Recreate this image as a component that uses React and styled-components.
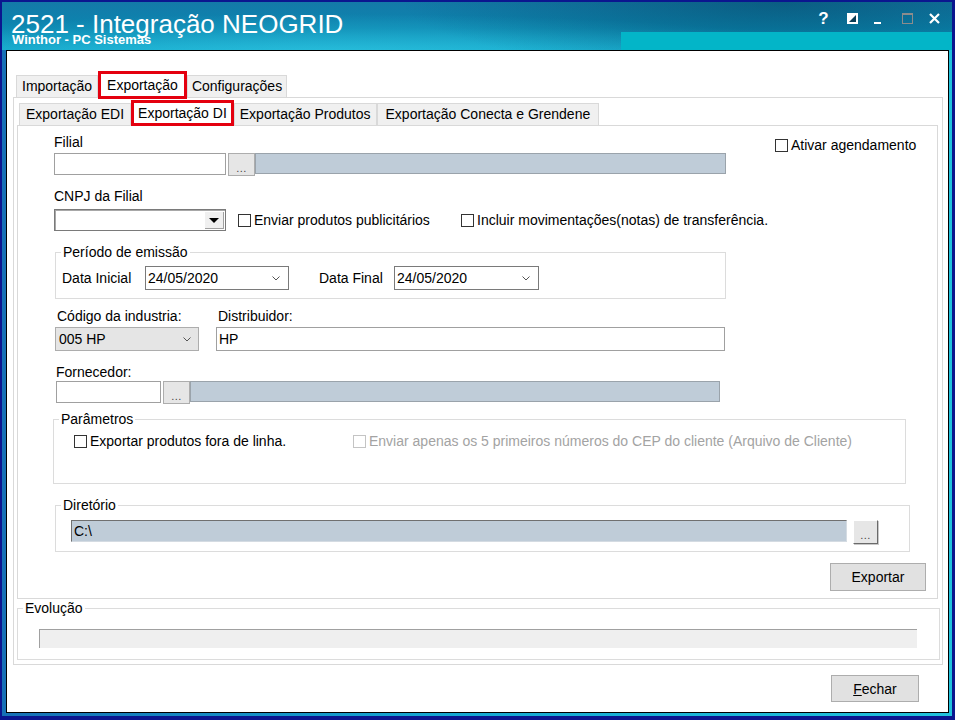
import React from "react";
import styled, { createGlobalStyle } from "styled-components";

const FONT = `"Liberation Sans", Arial, sans-serif`;

const GlobalStyle = createGlobalStyle`
  * { box-sizing: border-box; }
  html, body { margin: 0; padding: 0; background: #0b168f; }
  body { font-family: ${FONT}; font-size: 14px; color: #000; }
`;

/* ---------- window chrome ---------- */

const Frame = styled.div`
  width: 955px;
  height: 720px;
  padding: 2px 3px 4px 2px;
  background: #0b168f;
  display: flex;
`;

const Chrome = styled.div`
  flex: 1;
  display: flex;
  flex-direction: column;
  min-height: 0;
  padding: 0 3px 3px 4px;
  background: linear-gradient(to right, #1670b6 0%, #14a6d2 45%, #20c2dc 100%);
`;

const TitleBar = styled.header`
  height: 48px;
  margin: 0 -3px 0 -4px;
  padding: 0 12px 0 9px;
  display: flex;
  justify-content: space-between;
  align-items: flex-start;
  color: #fff;
  background:
    linear-gradient(#03b5c8, #03b5c8) no-repeat right 0 bottom 0 / 331px 18px,
    radial-gradient(ellipse 380px 70px at 780px 0px, rgba(3, 70, 100, 0.55), rgba(3, 70, 100, 0) 100%),
    radial-gradient(ellipse 520px 40px at 330px 52px, rgba(60, 210, 235, 0.55), rgba(60, 210, 235, 0) 100%),
    linear-gradient(180deg, #1479a8 0%, #0b86b0 55%, #10a4c8 100%);
`;

const TitleText = styled.div`
  padding-top: 11px;
  display: flex;
  flex-direction: column;
`;

const AppTitle = styled.h1`
  margin: 0;
  font: 400 26px/22px ${FONT};
  white-space: nowrap;
`;

const AppSubtitle = styled.div`
  padding-left: 1px;
  font: 700 13px/10px ${FONT};
  white-space: nowrap;
`;

const Controls = styled.div`
  display: flex;
  align-items: flex-start;
  margin-top: 11px;
  height: 11px;
`;

const Ctl = styled.span`
  display: block;
  width: ${(p) => p.$w || 11}px;
  height: 11px;
  margin-left: ${(p) => p.$ml || 0}px;
  color: #fff;
  font: 700 17px/11px ${FONT};
  text-align: center;
  svg { display: block; }
`;

const WindowBody = styled.main`
  flex: 1;
  min-height: 0;
  background: #fff;
  border: 1px solid #000;
  display: flex;
  flex-direction: column;
  padding: 20px 0 10px 0;
`;

/* ---------- tabs ---------- */

const TabStrip = styled.div`
  display: flex;
  align-items: flex-end;
  height: ${(p) => p.$h}px;
  padding-left: ${(p) => p.$pl}px;
  flex: none;
`;

const Tab = styled.div`
  height: 22px;
  padding: 0 ${(p) => p.$px ?? 6}px;
  border: 1px solid #d9d9d9;
  border-bottom: none;
  background: #f0f0f0;
  line-height: 21px;
  white-space: nowrap;
`;

const MarkedTab = styled.div`
  height: ${(p) => p.$h}px;
  margin-bottom: ${(p) => p.$drop}px;
  padding: 0 ${(p) => p.$px ?? 5}px;
  border: 3px solid #e4000f;
  background: #fff;
  line-height: ${(p) => p.$h - 6}px;
  white-space: nowrap;
  position: relative;
  z-index: 2;
`;

const OuterPage = styled.section`
  flex: 1;
  min-height: 0;
  margin: 0 5px 0 6px;
  border: 1px solid #d9d9d9;
  padding: 2px 2px 4px 3px;
  display: flex;
  flex-direction: column;
`;

const InnerPage = styled.div`
  flex: 1;
  min-height: 0;
  margin-right: 2px;
  border: 1px solid #d9d9d9;
  padding: 8px 0 0 36px;
  display: flex;
  flex-direction: column;
  align-items: flex-start;
`;

/* ---------- form parts ---------- */

const Row = styled.div`
  display: flex;
  align-items: ${(p) => p.$align || "flex-start"};
  margin: ${(p) => p.$mt || 0}px 0 0 ${(p) => p.$ml || 0}px;
`;

const Field = styled.div`
  display: flex;
  flex-direction: column;
  width: ${(p) => (p.$w ? `${p.$w}px` : "auto")};
  margin: ${(p) => p.$mt || 0}px 0 0 ${(p) => p.$ml || 0}px;
`;

const Label = styled.label`
  display: block;
  line-height: 16px;
  margin-bottom: ${(p) => p.$mb || 0}px;
  padding-left: ${(p) => p.$pl || 0}px;
  white-space: nowrap;
`;

const InlineLabel = styled.span`
  width: ${(p) => p.$w}px;
  margin-left: ${(p) => p.$ml || 0}px;
  line-height: 16px;
  white-space: nowrap;
  flex: none;
`;

const Lookup = styled.div`
  display: flex;
  align-items: flex-start;
`;

const Entry = styled.div`
  width: ${(p) => (p.$w ? `${p.$w}px` : "100%")};
  height: ${(p) => p.$h}px;
  border: 1px solid #a0a0a0;
  background: #fff;
  padding-left: 2px;
  line-height: ${(p) => p.$h - 2}px;
  flex: none;
`;

const Desc = styled.div`
  flex: 1;
  height: ${(p) => p.$h}px;
  background: #bfccd8;
  border: 1px solid #9aa3ab;
`;

const DotsButton = styled.div`
  flex: none;
  width: ${(p) => p.$w}px;
  height: ${(p) => p.$h}px;
  margin-left: ${(p) => p.$ml}px;
  background: #e6e6e6;
  border: 1px solid #adadad;
  border-right-color: ${(p) => (p.$raised ? "#6a6a6a" : "#adadad")};
  border-bottom-color: ${(p) => (p.$raised ? "#6a6a6a" : "#adadad")};
  border-top-color: ${(p) => (p.$raised ? "#fff" : "#adadad")};
  border-left-color: ${(p) => (p.$raised ? "#fff" : "#adadad")};
  box-shadow: ${(p) => (p.$raised ? "1px 1px 0 #c8c8c8" : "none")};
  font: 400 11px/1 ${FONT};
  color: #444;
  text-align: center;
  padding-top: 9px;
  letter-spacing: 0.5px;
  position: relative;
  z-index: 1;
`;

const Check = styled.label`
  display: flex;
  align-items: center;
  gap: 3px;
  line-height: 16px;
  white-space: nowrap;
  flex: none;
  width: ${(p) => (p.$w ? `${p.$w}px` : "auto")};
  margin: ${(p) => p.$mt || 0}px 0 0 ${(p) => p.$ml || 0}px;
  color: ${(p) => (p.$disabled ? "#a3a3a3" : "#000")};
`;

const Box = styled.span`
  width: 13px;
  height: 13px;
  flex: none;
  background: #fff;
  border: 1px solid ${(p) => (p.$disabled ? "#c4c4c4" : "#333")};
`;

const Combo = styled.div`
  width: ${(p) => p.$w}px;
  height: 22px;
  border: 1px solid #7a7a7a;
  box-shadow: inset 1px 1px 0 #a8a8a8;
  background: #fff;
  display: flex;
  justify-content: flex-end;
  padding: 1px;
  flex: none;
`;

const ComboDrop = styled.span`
  width: 20px;
  height: 100%;
  background: #f0f0f0;
  box-shadow: inset 1px 1px 0 #fff, inset -1px -1px 0 #a0a0a0;
  display: flex;
  align-items: center;
  justify-content: center;

  &::after {
    content: "";
    border-left: 5px solid transparent;
    border-right: 5px solid transparent;
    border-top: 5px solid #000;
    margin-top: 1px;
  }
`;

const Picker = styled.div`
  width: ${(p) => p.$w}px;
  height: ${(p) => p.$h || 24}px;
  flex: none;
  display: flex;
  align-items: center;
  justify-content: space-between;
  padding: 0 ${(p) => p.$pr || 8}px 0 ${(p) => p.$pl || 2}px;
  border: 1px solid ${(p) => (p.$grey ? "#adadad" : "#7a7a7a")};
  background: ${(p) => (p.$grey ? "#e5e5e5" : "#fff")};
  line-height: 16px;
  white-space: nowrap;
`;

const Chevron = () => (
  <svg width="8" height="5" viewBox="0 0 8 5">
    <path d="M0.5 0.5 L4 4 L7.5 0.5" fill="none" stroke="#555" strokeWidth="1" />
  </svg>
);

const Group = styled.fieldset`
  margin: ${(p) => p.$mt || 0}px 0 0 ${(p) => p.$ml || 0}px;
  width: ${(p) => (p.$w ? `${p.$w}px` : "auto")};
  align-self: ${(p) => (p.$w ? "flex-start" : "stretch")};
  padding: ${(p) => p.$pt}px ${(p) => p.$pr || 0}px ${(p) => p.$pb}px 5px;
  border: 1px solid #dcdcdc;
  min-width: 0;
  flex: none;
`;

const Legend = styled.legend`
  padding: 0 2px;
  line-height: 16px;
  font-size: 14px;
`;

const DirEntry = styled.div`
  flex: 1;
  height: 22px;
  margin-left: 10px;
  background: #bfccd8;
  border: 1px solid;
  border-color: #707070 #d4dbe2 #d4dbe2 #707070;
  padding-left: 2px;
  line-height: 20px;
`;

const Button = styled.button`
  width: ${(p) => p.$w}px;
  height: ${(p) => p.$h}px;
  flex: none;
  align-self: flex-end;
  margin: ${(p) => p.$mt || 0}px ${(p) => p.$mr || 0}px 0 0;
  padding: 0;
  background: #e1e1e1;
  border: 1px solid #adadad;
  font: 400 14px/1 ${FONT};
  color: #000;
`;

const Mnemonic = styled.span`
  text-decoration: underline;
`;

const Progress = styled.div`
  height: 19px;
  margin: 0 22px 0 16px;
  background: #efefef;
  border-top: 1px solid #a0a0a0;
  border-left: 1px solid #a0a0a0;
`;

/* ---------- page ---------- */

export default function App() {
  return (
    <>
      <GlobalStyle />
      <Frame>
        <Chrome>
          <TitleBar>
            <TitleText>
              <AppTitle>2521 - Integração NEOGRID</AppTitle>
              <AppSubtitle>Winthor - PC Sistemas</AppSubtitle>
            </TitleText>
            <Controls>
              <Ctl $w={11}>?</Ctl>
              <Ctl $ml={18}>
                <svg width="11" height="11" viewBox="0 0 11 11">
                  <rect x="0" y="0" width="11" height="11" fill="#fff" />
                  <path d="M2 9 L9 2 L9 9 Z" fill="#0a3d55" />
                </svg>
              </Ctl>
              <Ctl $ml={16} $w={7}>
                <svg width="7" height="11" viewBox="0 0 7 11">
                  <rect x="0" y="9" width="7" height="2" fill="#fff" />
                </svg>
              </Ctl>
              <Ctl $ml={21}>
                <svg width="11" height="11" viewBox="0 0 11 11">
                  <rect x="0.5" y="0.5" width="10" height="10" fill="none" stroke="#8c8c8c" />
                  <rect x="0" y="0" width="11" height="2" fill="#8c8c8c" />
                </svg>
              </Ctl>
              <Ctl $ml={16}>
                <svg width="11" height="11" viewBox="0 0 11 11">
                  <path d="M1 1 L10 10 M10 1 L1 10" stroke="#fff" strokeWidth="2.2" />
                </svg>
              </Ctl>
            </Controls>
          </TitleBar>

          <WindowBody>
            <TabStrip $h={26} $pl={9}>
              <Tab $px={5}>Importação</Tab>
              <MarkedTab $h={28} $drop={-2} $px={6}>Exportação</MarkedTab>
              <Tab $px={4}>Configurações</Tab>
            </TabStrip>

            <OuterPage>
              <TabStrip $h={25} $pl={2}>
                <Tab>Exportação EDI</Tab>
                <MarkedTab $h={26} $drop={-1} $px={4}>Exportação DI</MarkedTab>
                <Tab $px={5}>Exportação Produtos</Tab>
                <Tab $px={8}>Exportação Conecta e Grendene</Tab>
              </TabStrip>

              <InnerPage>
                <Row>
                  <Field $w={672}>
                    <Label $mb={3}>Filial</Label>
                    <Lookup>
                      <Entry $w={172} $h={22} />
                      <DotsButton $w={27} $h={23} $ml={2}>...</DotsButton>
                      <Desc $h={21} />
                    </Lookup>
                  </Field>
                  <Check $ml={49} $mt={3}>
                    <Box />
                    Ativar agendamento
                  </Check>
                </Row>

                <Field $mt={12}>
                  <Label $mb={5}>CNPJ da Filial</Label>
                  <Row $align="center">
                    <Combo $w={172}>
                      <ComboDrop />
                    </Combo>
                    <Check $ml={12} $w={223}>
                      <Box />
                      Enviar produtos publicitários
                    </Check>
                    <Check>
                      <Box />
                      Incluir movimentações(notas) de transferência.
                    </Check>
                  </Row>
                </Field>

                <Group $mt={13} $ml={1} $w={671} $pt={6} $pb={8}>
                  <Legend>Período de emissão</Legend>
                  <Row $align="center">
                    <InlineLabel $ml={1} $w={83}>Data Inicial</InlineLabel>
                    <Picker $w={144}>
                      24/05/2020
                      <Chevron />
                    </Picker>
                    <InlineLabel $ml={30} $w={75}>Data Final</InlineLabel>
                    <Picker $w={145}>
                      24/05/2020
                      <Chevron />
                    </Picker>
                  </Row>
                </Group>

                <Row $mt={9} $ml={1}>
                  <Field $w={144}>
                    <Label $mb={3} $pl={2}>Código da industria:</Label>
                    <Picker $w={144} $grey $pl={3} $pr={7}>
                      005 HP
                      <Chevron />
                    </Picker>
                  </Field>
                  <Field $ml={17} $w={509}>
                    <Label $mb={3} $pl={2}>Distribuidor:</Label>
                    <Entry $h={24}>HP</Entry>
                  </Field>
                </Row>

                <Field $mt={13} $ml={2} $w={664}>
                  <Label $mb={1}>Fornecedor:</Label>
                  <Lookup>
                    <Entry $w={105} $h={22} />
                    <DotsButton $w={27} $h={23} $ml={2}>...</DotsButton>
                    <Desc $h={21} />
                  </Lookup>
                </Field>

                <Group $mt={7} $ml={-1} $w={853} $pt={6} $pb={34}>
                  <Legend>Parâmetros</Legend>
                  <Row $ml={15}>
                    <Check $w={279}>
                      <Box />
                      Exportar produtos fora de linha.
                    </Check>
                    <Check $disabled>
                      <Box $disabled />
                      Enviar apenas os 5 primeiros números do CEP do cliente (Arquivo de Cliente)
                    </Check>
                  </Row>
                </Group>

                <Group $mt={13} $ml={1} $w={855} $pt={7} $pb={7} $pr={31}>
                  <Legend>Diretório</Legend>
                  <Row $align="flex-start">
                    <DirEntry>C:\</DirEntry>
                    <DotsButton $w={25} $h={24} $ml={6} $raised>...</DotsButton>
                  </Row>
                </Group>

                <Button $w={96} $h={28} $mt={11} $mr={11}>Exportar</Button>
              </InnerPage>

              <Group $mt={1} $pt={13} $pb={11}>
                <Legend>Evolução</Legend>
                <Progress />
              </Group>
            </OuterPage>

            <Button $w={88} $h={27} $mt={10} $mr={29}>
              <Mnemonic>F</Mnemonic>echar
            </Button>
          </WindowBody>
        </Chrome>
      </Frame>
    </>
  );
}
